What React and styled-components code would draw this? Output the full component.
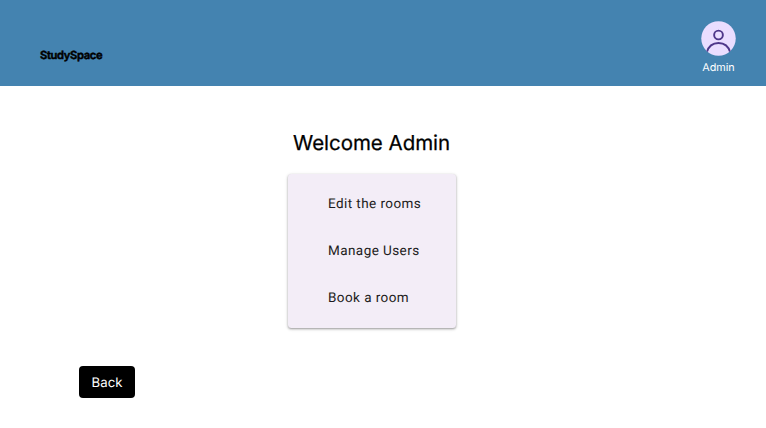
import React from 'react';
import styled, { createGlobalStyle } from 'styled-components';

const GlobalStyle = createGlobalStyle`
  * { box-sizing: border-box; }
  body { margin: 0; background: #fff; font-family: Inter, sans-serif; }
`;

const Page = styled.div`
  width: 766px;
  height: 428px;
  display: flex;
  flex-direction: column;
  overflow: hidden;
  text-rendering: geometricPrecision;
`;

const Header = styled.header`
  height: 86px;
  background: #4483b0;
  display: flex;
  justify-content: space-between;
  padding: 21px 30px 0 40px;
`;

const Brand = styled.div`
  margin-top: 27px;
  font-size: 11.2px;
  line-height: 14px;
  font-weight: 600;
  letter-spacing: -0.34px;
  color: #000;
  -webkit-text-stroke: 0.5px #000;
`;

const Profile = styled.div`
  display: flex;
  flex-direction: column;
  align-items: center;
  font-size: 10.8px;
  line-height: 14px;
  color: #fff;

  svg { display: block; margin-bottom: 5px; }
`;

const Main = styled.main`
  display: flex;
  flex-direction: column;
  padding: 43px 0 0;
`;

const Title = styled.h1`
  margin: 0 0 18px 293px;
  font-size: 20.5px;
  line-height: 27px;
  font-weight: 400;
  letter-spacing: -0.03px;
  -webkit-text-stroke: 0.25px #000;
`;

const Menu = styled.nav`
  width: 168.5px;
  height: 154px;
  margin-left: 287.5px;
  padding: 6px 0;
  background: #f3edf7;
  border-radius: 3.5px;
  box-shadow: 0 1px 2px rgba(0, 0, 0, 0.3), 0 1px 3px 1px rgba(0, 0, 0, 0.1);
`;

const MenuItem = styled.div`
  height: 47px;
  padding: 1px 0 0 40.5px;
  display: flex;
  align-items: center;
  font-family: Roboto, sans-serif;
  font-size: 13.5px;
  letter-spacing: 0.43px;
  color: #1d1b20;
`;

const BackButton = styled.button`
  width: 56px;
  height: 32px;
  margin: 38px 0 0 79px;
  padding: 2px 0 0;
  border: 0;
  border-radius: 4px;
  background: #000;
  color: #fff;
  font: 400 13.2px/20px Inter, sans-serif;
  text-rendering: geometricPrecision;
`;

const items = ['Edit the rooms', 'Manage Users', 'Book a room'];

function Avatar() {
  return (
    <svg width="35" height="35" viewBox="0 0 40 40" fill="none">
      <defs>
        <clipPath id="avatar-disc"><circle cx="20" cy="20" r="19.7" /></clipPath>
      </defs>
      <circle cx="20" cy="20" r="19.7" fill="#eaddff" />
      <g clipPath="url(#avatar-disc)" stroke="#4f378a" strokeWidth="2.2">
        <circle cx="20" cy="16" r="5" />
        <path d="M6.5 36C8.4 29.5 13.5 25.2 20 25.2S31.6 29.5 33.5 36" />
      </g>
    </svg>
  );
}

export default function App() {
  return (
    <Page>
      <GlobalStyle />
      <Header>
        <Brand>StudySpace</Brand>
        <Profile>
          <Avatar />
          Admin
        </Profile>
      </Header>
      <Main>
        <Title>Welcome Admin</Title>
        <Menu>
          {items.map((label) => <MenuItem key={label}>{label}</MenuItem>)}
        </Menu>
        <BackButton>Back</BackButton>
      </Main>
    </Page>
  );
}
